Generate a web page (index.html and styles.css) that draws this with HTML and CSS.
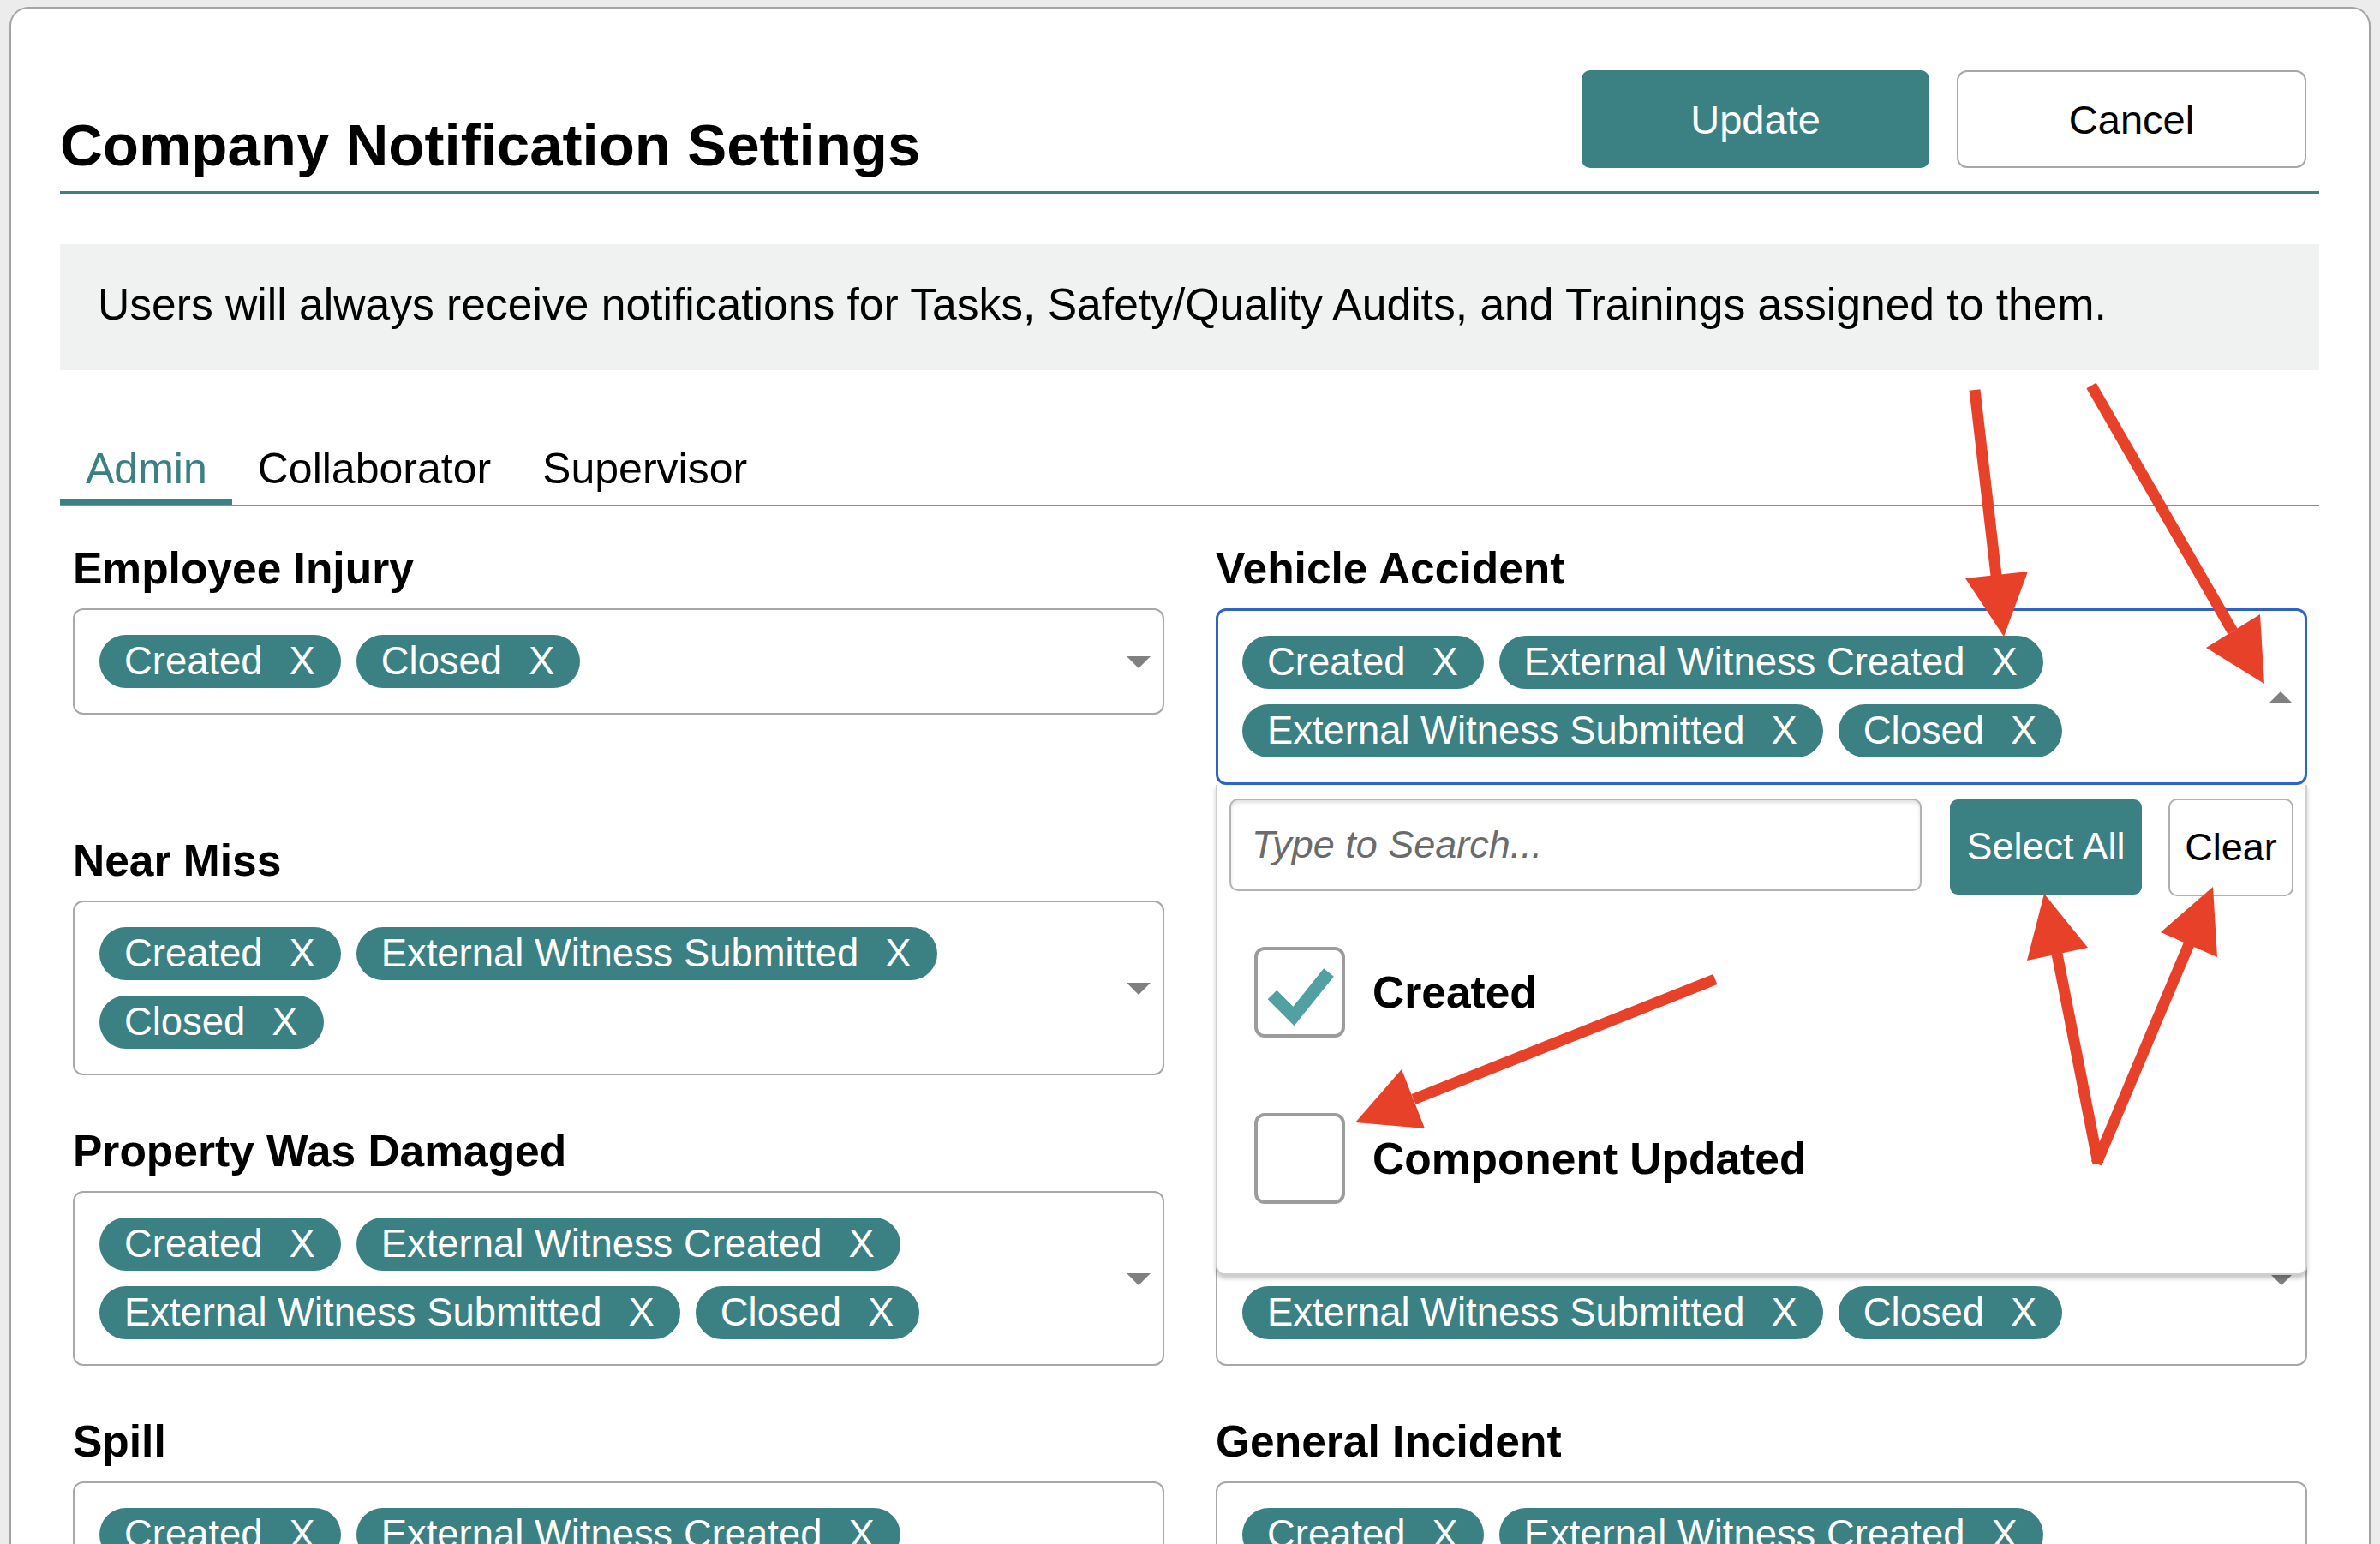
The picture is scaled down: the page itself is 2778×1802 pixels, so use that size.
FILE: index.html
```html
<!DOCTYPE html>
<html lang="en">
<head>
<meta charset="utf-8">
<title>Company Notification Settings</title>
<link rel="stylesheet" href="styles.css">
</head>
<body>
<div class="card">
  <header class="head">
    <h1 class="title">Company Notification Settings</h1>
    <div class="actions">
      <button class="btn btn-primary">Update</button>
      <button class="btn">Cancel</button>
    </div>
  </header>

  <div class="info">Users will always receive notifications for Tasks, Safety/Quality Audits, and Trainings assigned to them.</div>

  <nav class="tabs">
    <span class="tab active">Admin</span>
    <span class="tab">Collaborator</span>
    <span class="tab">Supervisor</span>
  </nav>

  <div class="grid">
    <section class="field">
      <div class="label">Employee Injury</div>
      <div class="select">
        <div class="chips">
          <span class="chip">Created<span class="x">X</span></span>
          <span class="chip">Closed<span class="x">X</span></span>
        </div>
        <svg class="caret" viewBox="0 0 28 14"><path d="M0 0H28L14 14Z"/></svg>
      </div>
    </section>

    <section class="field">
      <div class="label">Vehicle Accident</div>
      <div class="select-wrap">
        <div class="select open">
          <div class="chips">
            <span class="chip">Created<span class="x">X</span></span>
            <span class="chip">External Witness Created<span class="x">X</span></span>
            <span class="chip">External Witness Submitted<span class="x">X</span></span>
            <span class="chip">Closed<span class="x">X</span></span>
          </div>
          <svg class="caret" viewBox="0 0 28 14"><path d="M0 14H28L14 0Z"/></svg>
        </div>
        <div class="dropdown">
          <div class="search-row">
            <input class="search" type="text" placeholder="Type to Search...">
            <button class="btn-sm select-all">Select All</button>
            <button class="btn-sm clear">Clear</button>
          </div>
          <div class="options">
            <div class="option">
              <span class="checkbox"><svg class="check" viewBox="0 0 98 98"><polyline points="17,52 42,77 83,26"/></svg></span>
              <span>Created</span>
            </div>
            <div class="option">
              <span class="checkbox"></span>
              <span>Component Updated</span>
            </div>
          </div>
        </div>
      </div>
    </section>

    <section class="field">
      <div class="label">Near Miss</div>
      <div class="select">
        <div class="chips">
          <span class="chip">Created<span class="x">X</span></span>
          <span class="chip">External Witness Submitted<span class="x">X</span></span>
          <span class="chip">Closed<span class="x">X</span></span>
        </div>
        <svg class="caret" viewBox="0 0 28 14"><path d="M0 0H28L14 14Z"/></svg>
      </div>
    </section>

    <section class="field under">
      <div class="label">Observation</div>
      <div class="select">
        <div class="chips">
          <span class="chip">Created<span class="x">X</span></span>
          <span class="chip">Closed<span class="x">X</span></span>
        </div>
        <svg class="caret" viewBox="0 0 28 14"><path d="M0 0H28L14 14Z"/></svg>
      </div>
    </section>

    <section class="field">
      <div class="label">Property Was Damaged</div>
      <div class="select">
        <div class="chips">
          <span class="chip">Created<span class="x">X</span></span>
          <span class="chip">External Witness Created<span class="x">X</span></span>
          <span class="chip">External Witness Submitted<span class="x">X</span></span>
          <span class="chip">Closed<span class="x">X</span></span>
        </div>
        <svg class="caret" viewBox="0 0 28 14"><path d="M0 0H28L14 14Z"/></svg>
      </div>
    </section>

    <section class="field">
      <div class="label under">Illness</div>
      <div class="select">
        <div class="chips">
          <span class="chip under">Created<span class="x">X</span></span>
          <span class="chip under">External Witness Created<span class="x">X</span></span>
          <span class="chip">External Witness Submitted<span class="x">X</span></span>
          <span class="chip">Closed<span class="x">X</span></span>
        </div>
        <svg class="caret" viewBox="0 0 28 14"><path d="M0 0H28L14 14Z"/></svg>
      </div>
    </section>

    <section class="field">
      <div class="label">Spill</div>
      <div class="select">
        <div class="chips">
          <span class="chip">Created<span class="x">X</span></span>
          <span class="chip">External Witness Created<span class="x">X</span></span>
          <span class="chip">External Witness Submitted<span class="x">X</span></span>
          <span class="chip">Closed<span class="x">X</span></span>
        </div>
        <svg class="caret" viewBox="0 0 28 14"><path d="M0 0H28L14 14Z"/></svg>
      </div>
    </section>

    <section class="field">
      <div class="label">General Incident</div>
      <div class="select">
        <div class="chips">
          <span class="chip">Created<span class="x">X</span></span>
          <span class="chip">External Witness Created<span class="x">X</span></span>
          <span class="chip">External Witness Submitted<span class="x">X</span></span>
          <span class="chip">Closed<span class="x">X</span></span>
        </div>
        <svg class="caret" viewBox="0 0 28 14"><path d="M0 0H28L14 14Z"/></svg>
      </div>
    </section>
  </div>
</div>

<svg class="annot" viewBox="0 0 2778 1802" aria-hidden="true">
  <g class="arrow-line">
    <line x1="2305" y1="455" x2="2331" y2="680"/>
    <line x1="2441" y1="450" x2="2606" y2="737"/>
    <line x1="2002" y1="1143" x2="1650" y2="1283"/>
    <line x1="2449" y1="1358" x2="2401" y2="1113"/>
    <line x1="2447" y1="1358" x2="2555" y2="1102"/>
  </g>
  <g class="arrow-head">
    <polygon points="2294,675 2367,667 2339,743"/>
    <polygon points="2575,756 2638,717 2643,798"/>
    <polygon points="1636,1248 1663,1317 1582,1310"/>
    <polygon points="2366,1121 2437,1106 2386,1043"/>
    <polygon points="2522,1088 2588,1117 2583,1035"/>
  </g>
</svg>
</body>
</html>
```

FILE: styles.css
```css
* { box-sizing: border-box; }

html, body { margin: 0; }

body {
  position: relative;
  width: 2778px;
  height: 1802px;
  overflow: hidden;
  background: #ececec;
  font-family: "Liberation Sans", Arial, Helvetica, sans-serif;
  color: #000;
}

.card {
  margin: 8px 0 0 11px;
  width: 2756px;
  min-height: 1794px;
  background: #fff;
  border: 2px solid #a3a3a3;
  border-bottom: 0;
  border-radius: 22px 22px 0 0;
  padding: 72px 58px 0 57px;
}

/* header */
.head {
  display: flex;
  align-items: flex-end;
  justify-content: space-between;
  border-bottom: 4px solid #3b8083;
}

.title {
  margin: 0 0 14px;
  font-size: 69px;
  font-weight: 700;
  line-height: 79px;
}

.actions {
  display: flex;
  gap: 32px;
  margin: 0 15px 27px 0;
}

.btn {
  display: flex;
  align-items: center;
  justify-content: center;
  width: 408px;
  height: 114px;
  padding: 0;
  font-family: "Liberation Sans", Arial, sans-serif;
  font-size: 47px;
  color: #000;
  background: #fff;
  border: 2px solid #a8a8a8;
  border-radius: 12px;
}

.btn-primary {
  width: 406px;
  color: #fff;
  background: #3b8083;
  border-color: #3b8083;
  border-radius: 10px;
}

/* info banner */
.info {
  margin-top: 58px;
  padding: 41px 44px 48px;
  background: #f0f2f1;
  font-size: 51.6px;
  line-height: 58px;
}

/* tabs */
.tabs {
  display: flex;
  margin-top: 87px;
  border-bottom: 2px solid #8c8c8c;
}

.tab {
  padding: 0 30px 5px;
  font-size: 50px;
  line-height: 57.5px;
  border-bottom: 7px solid transparent;
}

.tab:first-child { padding-right: 29px; }

.tab.active {
  color: #3b8083;
  border-bottom-color: #3b8083;
}

/* grid of fields */
.grid {
  display: grid;
  grid-template-columns: 1fr 1fr;
  column-gap: 60px;
  row-gap: 59px;
  margin-top: 43px;
  padding: 0 14px 0 15px;
}

.label {
  margin-bottom: 17px;
  font-size: 51.5px;
  font-weight: 700;
  line-height: 59px;
}

.select {
  position: relative;
  padding: 29px 80px 29px 29px;
  border: 2px solid #a8a8a8;
  border-radius: 12px;
}

.select.open {
  padding: 29px 80px 29px 28px;
  border: 3px solid #2f63c8;
}

.select-wrap { position: relative; }

.chips {
  display: flex;
  flex-wrap: wrap;
  gap: 18px;
}

.chip {
  display: inline-flex;
  align-items: center;
  height: 62px;
  padding: 0 30px 0 29px;
  border-radius: 31px;
  background: #3b8083;
  color: #fff;
  font-size: 45.4px;
  white-space: nowrap;
}

.chip .x { margin-left: 31px; }

/* content that sits under the open dropdown panel */
.under { visibility: hidden; }

.caret {
  position: absolute;
  right: 14px;
  top: 50%;
  width: 28px;
  height: 14px;
  margin-top: -6px;
  fill: #808080;
}

/* open dropdown */
.dropdown {
  position: absolute;
  top: 100%;
  left: 0;
  right: 0;
  z-index: 5;
  height: 572px;
  background: #fff;
  border: 2px solid #cfcfcf;
  border-top: 0;
  border-radius: 0 0 10px 10px;
  box-shadow: 0 4px 5px rgba(0, 0, 0, 0.22);
}

.search-row {
  display: flex;
  align-items: flex-start;
  padding: 16px 14px 0;
}

.search {
  width: 808px;
  height: 108px;
  padding: 0 24px;
  font-family: "Liberation Sans", Arial, sans-serif;
  font-size: 45px;
  border: 2px solid #b3b3b3;
  border-radius: 10px;
  box-shadow: inset 0 3px 4px rgba(0, 0, 0, 0.12);
}

.search::placeholder {
  color: #6b6b6b;
  font-style: italic;
}

.btn-sm {
  padding: 0;
  font-family: "Liberation Sans", Arial, sans-serif;
  font-size: 45px;
}

.select-all {
  width: 224px;
  height: 111px;
  margin: 1px 0 0 33px;
  color: #fff;
  background: #3b8083;
  border: 0;
  border-radius: 9px;
}

.clear {
  width: 146px;
  height: 114px;
  margin-left: 31px;
  color: #000;
  background: #fff;
  border: 2px solid #b0b0b0;
  border-radius: 10px;
}

.options {
  display: flex;
  flex-direction: column;
  gap: 88px;
  padding: 59px 0 0 43px;
}

.option {
  display: flex;
  align-items: center;
  gap: 32px;
  font-size: 51.5px;
  font-weight: 700;
}

.checkbox {
  flex: none;
  width: 106px;
  height: 106px;
  border: 4px solid #9c9c9c;
  border-radius: 12px;
}

.check {
  display: block;
  width: 98px;
  height: 98px;
  fill: none;
  stroke: #52a0a2;
  stroke-width: 15;
}

/* annotation overlay */
.annot {
  position: absolute;
  top: 0;
  left: 0;
  width: 2778px;
  height: 1802px;
  z-index: 10;
  pointer-events: none;
}

.arrow-line line {
  stroke: #e8412a;
  stroke-width: 13;
}

.arrow-head polygon { fill: #e8412a; }
```
